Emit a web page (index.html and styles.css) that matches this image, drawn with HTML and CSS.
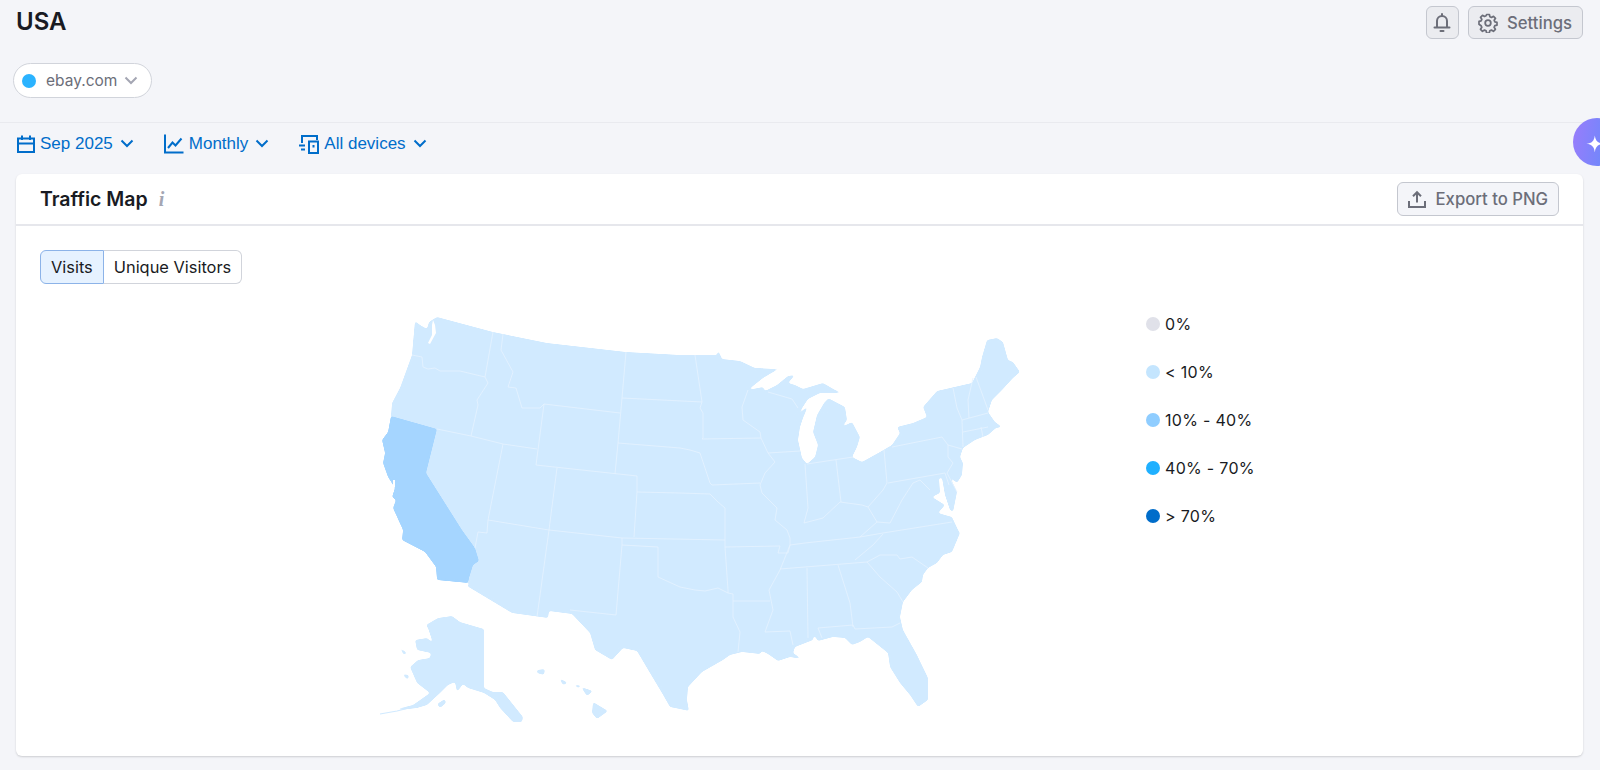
FILE: index.html
```html
<!DOCTYPE html>
<html lang="en">
<head>
<meta charset="utf-8">
<title>Traffic Map</title>
<link rel="stylesheet" href="styles.css">
</head>
<body>
<header class="top">
  <h1 class="title">USA</h1>
  <div class="top-actions">
    <button class="btn btn-icon" aria-label="Notifications">
      <svg class="ico" viewBox="0 0 18 20" width="18" height="20"><path d="M9 1v2M4 14V8a5 5 0 0 1 10 0v6M1.500 14.500h15M7.500 18h3" fill="none" stroke="currentColor" stroke-width="2" stroke-linecap="round"/></svg>
    </button>
    <button class="btn">
      <svg class="ico" viewBox="0 0 20 20" width="20" height="20"><circle cx="10" cy="10" r="2.800" fill="none" stroke="currentColor" stroke-width="1.800"/><path d="M8.600 1.500h2.800l.5 2.300 1.600.7 2-1.200 2 2-1.300 2 .7 1.600 2.100.5v2.800l-2.200.5-.7 1.600 1.300 2-2 2-2-1.200-1.600.7-.5 2.200H8.600l-.5-2.200-1.600-.7-2 1.200-2-2 1.300-2-.7-1.600L1 11.200V8.400l2.100-.5.7-1.600-1.300-2 2-2 2 1.200 1.600-.7z" fill="none" stroke="currentColor" stroke-width="1.700" stroke-linejoin="round"/></svg>
      <span>Settings</span>
    </button>
  </div>
</header>

<div class="domain-row">
  <div class="domain">
    <span class="dot dot-domain"></span>
    <span class="domain-name">ebay.com</span>
    <svg class="chev chev-grey" viewBox="0 0 14 9" width="14" height="9"><path d="M1.500 1.500l5.500 5.500 5.500-5.500" fill="none" stroke="currentColor" stroke-width="2"/></svg>
  </div>
</div>

<nav class="filters">
  <div class="filter">
    <svg class="ico-blue" viewBox="0 0 18 18" width="18" height="18"><path d="M1 3.500h16v13.500H1zM1 8.500h16M5 .5v4.500M13 .5v4.500" fill="none" stroke="currentColor" stroke-width="2"/></svg>
    <span>Sep 2025</span>
    <svg class="chev" viewBox="0 0 14 9" width="14" height="9"><path d="M1.500 1.500l5.500 5.500 5.500-5.500" fill="none" stroke="currentColor" stroke-width="2"/></svg>
  </div>
  <div class="filter">
    <svg class="ico-blue" viewBox="0 0 20 20" width="20" height="20"><path d="M1 .5v18h18.500M4 14l4.500-5.500 3 3 6-7" fill="none" stroke="currentColor" stroke-width="2"/></svg>
    <span>Monthly</span>
    <svg class="chev" viewBox="0 0 14 9" width="14" height="9"><path d="M1.500 1.500l5.500 5.500 5.500-5.500" fill="none" stroke="currentColor" stroke-width="2"/></svg>
  </div>
  <div class="filter">
    <svg class="ico-blue" viewBox="0 0 20 20" width="20" height="20"><path d="M3 9V2h15v4M0 11.500h6M2 15.500h4M10 7.500h9v11.500h-9zM14.500 11v2.500" fill="none" stroke="currentColor" stroke-width="2"/></svg>
    <span>All devices</span>
    <svg class="chev" viewBox="0 0 14 9" width="14" height="9"><path d="M1.500 1.500l5.500 5.500 5.500-5.500" fill="none" stroke="currentColor" stroke-width="2"/></svg>
  </div>
</nav>

<div class="ai-bubble">
  <svg viewBox="0 0 20 20" width="24" height="24"><path d="M9 2c.6 4.600 2.400 6.400 7 7-4.600.6-6.400 2.400-7 7-.6-4.600-2.400-6.400-7-7 4.600-.6 6.400-2.400 7-7z" fill="#fff"/></svg>
</div>

<main class="card">
  <div class="card-head">
    <div class="card-title">
      <h2>Traffic Map</h2>
      <span class="info">i</span>
    </div>
    <button class="btn btn-export">
      <svg class="ico" viewBox="0 0 18 18" width="18" height="18"><path d="M9 12.500V2.500M5 6.200L9 2.200l4 4M1 11v6h16v-6" fill="none" stroke="currentColor" stroke-width="2"/></svg>
      <span>Export to PNG</span>
    </button>
  </div>
  <div class="card-body">
    <div class="toggle">
      <span class="seg seg-on">Visits</span><span class="seg">Unique Visitors</span>
    </div>
    <div class="map-row">
      <svg class="map" viewBox="370 310 660 420" width="660" height="420" role="img" aria-label="Map of the USA">
        <defs>
          <filter id="soft" x="-5%" y="-5%" width="110%" height="110%">
            <feGaussianBlur stdDeviation="1"/>
            <feComponentTransfer><feFuncA type="linear" slope="5" intercept="-2"/></feComponentTransfer>
          </filter>
        </defs>
        <g class="soft">
        <path class="land" d="M415 321L420 325 427 329 429 322 432 320 437 317 493 332 503 334 547 343 626 352 680 355 717 355 718 350 722 359 740 361 755 368 775 369 785 365 763 378 748 390 763 387 765 391 777 385 788 376 795 375 788 383 795 385 803 389 823 383 835 390 842 393 820 393 808 399 795 419 801 412 808 406 803 418 800 427 798 440 802 458 807 464 815 457 818 445 813 432 817 415 827 398 825 412 828 398 845 407 847 420 842 427 852 422 860 437 857 447 852 457 862 462 880 452 892 445 900 433 897 427 913 423 927 417 923 407 937 391 972 383 975 377 980 367 982 357 987 340 997 338 1003 342 1008 360 1013 362 1020 372 1013 378 1002 390 992 400 988 412 995 422 1002 427 996 428 988 435 975 440 963 448 960 457 963 463 962 475 957 483 950 477 957 492 953 512 950 510 945 495 942 478 939 478 940 493 932 497 945 505 938 513 952 517 958 530 960 533 952 552 943 555 937 563 928 568 923 575 922 582 912 590 903 602 900 617 903 630 917 655 928 678 928 700 918 707 910 695 900 683 890 667 888 653 878 645 868 637 860 642 852 645 845 638 833 637 818 641 814 635 813 640 795 647 793 653 802 659 790 657 778 661 768 654 762 651 760 654 742 652 730 655 723 660 702 672 688 687 687 700 689 711 680 709 670 707 662 693 650 673 637 651 623 648 612 660 595 650 590 633 572 614 549 611 548 618 512 613 467 586 470 583 437 580 436 567 425 552 402 540 403 530 393 508 396 500 392 497 395 488 388 477 383 463 385 453 382 440 388 432 391 416 392 403 400 388 412 355 413 343z"/>
        <path class="land" d="M960 458L975 447 990 441 1004 432 991 439 975 447z"/>
        <path class="land" d="M426 625L438 618 452 616 460 622 477 627 484 629 484 688 493 692 503 692 523 717 522 722 513 722 500 708 495 700 484 693 468 688 463 684 457 692 455 682 448 685 440 693 427 705 417 708 400 710 397 709 413 705 430 693 417 683 410 667 418 660 430 658 431 653 417 650 415 640 427 638 433 643 428 628z"/>
        <path class="land" d="M437 704L445 699 446 703 440 708zM402 674L409 675 408 680zM399 647L407 653 404 655zM593 702L608 711 597 719 592 713zM559 678L568 683 563 685zM581 687L593 691 587 696zM573 684L582 686 578 688zM537 670L545 669 544 675 537 673zM531 675L536 672 533 676z"/>
        </g>
        <path class="tail" d="M380 714L397 711 413 707"/>
        <path class="hi soft" d="M391 416L437 429 426 473 462 530 475 548 479 561 473 565 469 578 468 583 437 580 436 567 425 552 402 540 403 530 393 508 396 500 392 497 395 488 388 477 383 463 385 453 382 440 388 432z"/>
        <path class="water" d="M433 320L435 325 436 333 430 344 428 343 432 335 432 325zM393 480L395 480 395 488 393 486z"/>
        <path class="borders" d="M493 332L485 377 488 383 477 400 478 405 471 436M412 355L422 357 423 367 428 369 435 368 440 371 460 371 485 377M437 429L471 436 503 444 537 449M503 334L501 350 513 372 508 387 516 388 522 408 540 408 544 404 536 465M544 404L620 413M626 352L622 398 618 443 615 474M536 465L637 476 637 492 634 537M557 468L549 530 537 617M503 444L488 520 487 533 478 532 475 548M488 520L549 530 622 538 725 540M637 492L680 493 710 494 718 502 725 508 725 547 728 590 728 593M622 398L702 402M618 443L680 448 690 450 700 453 710 483 712 485 760 483M695 355L702 402 700 408 703 413 703 438 702 439 761 438M622 538L622 545 616 615 570 610M622 545L658 547 658 577 680 587 695 590 705 591 718 588 728 593 733 594 733 617 740 632 738 652M761 438L768 453 775 462 765 473 760 485 762 493 777 508 775 520 787 530 790 538 790 545 780 570 769 590 773 610 765 632 790 631 793 645M748 390L742 407 743 420 760 432 761 438M768 392L792 399 798 408M768 453L800 451M805 464L808 508 804 523 823 518 840 502 862 505 868 507 883 490 887 483 884 450M807 464L853 457M836 460L841 502M892 447L942 437 948 445 962 449M888 483L945 473M948 445L948 457 953 463 947 473 957 492M945 473L949 485M868 507L877 522 890 523 902 500 913 483 920 480 930 490M877 522L860 537M790 545L805 543 860 537 883 533 952 522M953 388L957 408 962 420 963 447M973 378L968 400 969 418M976 377L988 410M962 420L988 413M963 432L988 427M981 427L983 437M725 547L780 546 778 553 788 553 790 545M733 601L770 601M780 569L867 562M883 534L873 545 855 560M807 568L808 638M838 565L850 603 853 627M818 628L853 625 855 629 892 627 900 623M818 628L822 638M867 562L880 577 897 592 903 602M867 562L880 555 897 555 900 559 912 557 928 568"/>
      </svg>
      <ul class="legend">
        <li><span class="dot l0"></span>0%</li>
        <li><span class="dot l1"></span>&lt; 10%</li>
        <li><span class="dot l2"></span>10% - 40%</li>
        <li><span class="dot l3"></span>40% - 70%</li>
        <li><span class="dot l4"></span>&gt; 70%</li>
      </ul>
    </div>
  </div>
</main>
</body>
</html>
```
FILE: styles.css
```css
* { box-sizing: border-box; }
html, body { margin: 0; height: 770px; overflow: hidden; }
body {
  background: #f4f5f9;
  font-family: Inter, "Liberation Sans", sans-serif;
  color: #191b23;
  position: relative;
}
.top {
  display: flex;
  justify-content: space-between;
  align-items: flex-start;
  height: 63px;
  padding: 6px 17px 0 16px;
}
.title { margin: 2px 0 0; font-size: 24px; line-height: 28px; font-weight: 600; }
.top-actions { display: flex; gap: 9px; }
.btn {
  display: inline-flex;
  align-items: center;
  gap: 9px;
  height: 33px;
  padding: 0 10px 0 9px;
  border: 1px solid #c4c7cf;
  border-radius: 6px;
  background: #ebecf0;
  color: #6c6e79;
  font: 500 16.7px/20px Inter, sans-serif;
}
.btn-icon { width: 33px; padding: 0; justify-content: center; }
.ico { display: block; flex: none; }
.domain-row { height: 59px; padding-left: 13px; }
.domain {
  display: inline-flex;
  align-items: center;
  width: 139px;
  height: 35px;
  padding: 0 12px 0 8px;
  background: #fff;
  border: 1px solid #d1d4db;
  border-radius: 18px;
}
.dot { display: block; flex: none; width: 14px; height: 14px; border-radius: 50%; }
.dot-domain { background: #2bb3ff; }
.domain-name { margin-left: 10px; font-size: 15.5px; color: #6c6e79; }
.chev { display: block; flex: none; color: #006dca; }
.chev-grey { margin-left: 7px; color: #a4a6b3; }
.filters {
  display: flex;
  align-items: center;
  gap: 30px;
  height: 52px;
  padding: 0 0 10px 17px;
  border-top: 1px solid #e9eaef;
  color: #006dca;
  font: 17px/20px "Liberation Sans", Arial, sans-serif;
}
.filter { display: flex; align-items: center; gap: 5px; }
.filter .chev { margin-left: 2px; }
.ico-blue { display: block; flex: none; }
.ai-bubble {
  position: absolute;
  left: 1573px;
  top: 118px;
  width: 48px;
  height: 48px;
  border-radius: 50%;
  background: linear-gradient(100deg, #9a7cfb, #5c8dfb);
  display: flex;
  align-items: center;
  padding: 6px 0 0 11px;
}
.card {
  margin: 0 17px 0 16px;
  height: 582px;
  background: #fff;
  border-radius: 6px;
  box-shadow: 0 1px 2px rgba(25, 27, 35, .18);
}
.card-head {
  display: flex;
  align-items: center;
  justify-content: space-between;
  height: 52px;
  padding: 0 24px;
  border-bottom: 2px solid #e6e7ec;
}
.card-title { display: flex; align-items: center; gap: 11px; }
.card-title h2 { margin: 0; font-size: 19.5px; line-height: 24px; font-weight: 600; }
.info { font: italic 700 20px/20px "Liberation Serif", serif; color: #a4a6b3; }
.btn-export { height: 34px; background: #f4f5f9; gap: 10px; padding: 0 10px; }
.card-body { padding: 24px 24px 0; }
.toggle { display: flex; height: 34px; font-size: 16.4px; }
.seg {
  display: flex;
  align-items: center;
  padding: 0 10px;
  border: 1px solid #d1d4db;
  border-left: 0;
  border-radius: 0 6px 6px 0;
}
.seg-on {
  border: 1px solid #8cb3e8;
  border-radius: 6px 0 0 6px;
  background: #e6f2ff;
}
.map-row { display: flex; align-items: flex-start; margin-top: 26px; padding-left: 330px; }
.map { display: block; flex: none; }
.soft { filter: url(#soft); }
.land { fill: #d1eaff; }
.hi { fill: #a5d5ff; }
.water { fill: #fff; }
.tail { fill: none; stroke: #d1eaff; stroke-width: 1.2; }
.borders { fill: none; stroke: #e6f3ff; stroke-width: .8; }
.legend { list-style: none; margin: 2px 0 0 116px; padding: 0; font-size: 16px; letter-spacing: .3px; }
.legend li { display: flex; align-items: center; gap: 5px; height: 24px; margin-bottom: 24px; }
.l0 { background: #e0e1e9; }
.l1 { background: #c4e5fe; }
.l2 { background: #8fcdff; }
.l3 { background: #1fb0ff; }
.l4 { background: #006dca; }
```
